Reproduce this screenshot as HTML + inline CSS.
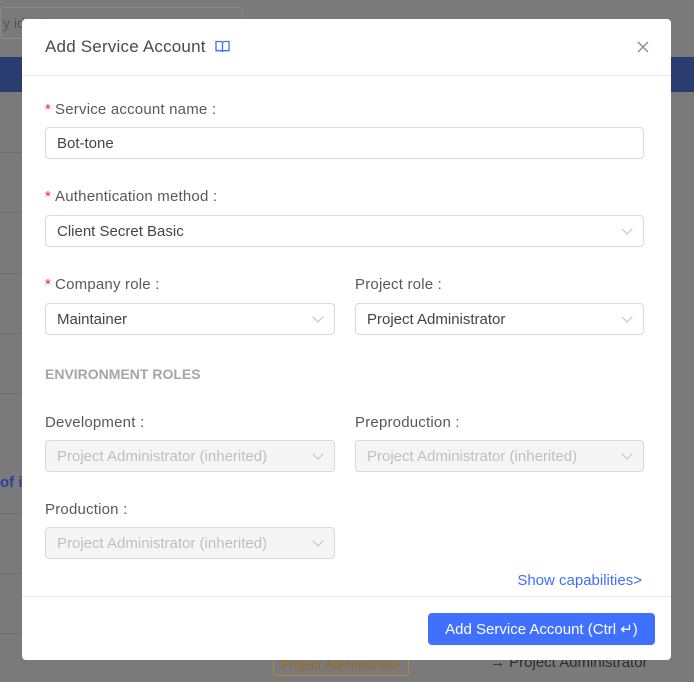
<!DOCTYPE html>
<html><head><meta charset="utf-8"><style>
*{box-sizing:border-box;margin:0;padding:0}
body{width:694px;height:682px;overflow:hidden;background:#7a7a7a;font-family:"Liberation Sans",sans-serif;position:relative}
.a{position:absolute}
.line{position:absolute;left:0;width:22px;height:1px;background:#6e6e6e}
.modal{position:absolute;left:22px;top:19px;width:649px;height:641px;background:#fff;border-radius:4px}
.lbl{position:absolute;font-size:15px;color:#595959;letter-spacing:0.2px}
.req{color:#f5222d;margin-right:4px}
.inp{position:absolute;height:32px;border:1px solid #d9d9d9;border-radius:4px;font-size:15px;color:#444;padding:0 11px;line-height:32px;background:#fff}
.dis{background:#f5f5f5;color:#bfbfbf}
.arr{position:absolute;right:12px;top:9px;width:8px;height:8px;border-right:1px solid #bfbfbf;border-bottom:1px solid #bfbfbf;transform:rotate(45deg)}
</style></head><body>
<div class="a" style="left:0;top:7px;width:243px;height:32px;border:1px solid #8a8a8a;border-radius:4px;color:#555;font-size:14px;line-height:30px;padding-left:2px">y identity</div>
<div class="a" style="left:0;top:57px;width:694px;height:35px;background:#2a3c70"></div>
<div class="line" style="top:152px"></div><div class="line" style="top:212px"></div><div class="line" style="top:273px"></div><div class="line" style="top:333px"></div><div class="line" style="top:393px"></div><div class="line" style="top:513px"></div><div class="line" style="top:573px"></div><div class="line" style="top:633px"></div>
<div class="a" style="left:0;top:474px;color:#2b3f9f;font-size:15px;font-weight:bold">of i</div>
<div class="a" style="left:273px;top:654px;width:136px;height:22px;border:1px solid #b3893a;border-radius:3px;color:#9a6a1a;font-size:13px;line-height:20px;padding-left:7px">Project Administrator</div>
<div class="a" style="left:490px;top:654px;color:#2e2e2e;font-size:15px">→ Project Administrator</div>

<div class="modal">
<div class="a" style="left:23px;top:18px;font-size:17px;color:#4a4a4a;letter-spacing:0.2px">Add Service Account</div>
<svg class="a" style="left:193px;top:21px" width="15" height="13" viewBox="0 0 15 13" fill="none" stroke="#3f6fff" stroke-width="1.3"><path d="M1 1.5h4.5c1 0 2 .8 2 1.8V12c0-.8-.9-1.3-2-1.3H1z M14 1.5H9.5c-1 0-2 .8-2 1.8V12c0-.8.9-1.3 2-1.3H14z"/></svg>
<svg class="a" style="left:615px;top:22px" width="12" height="12" viewBox="0 0 12 12" stroke="#8c8c8c" stroke-width="1.4"><path d="M1 1L11 11M11 1L1 11"/></svg>
<div class="a" style="left:0;top:56px;width:649px;height:1px;background:#e8e8e8"></div>

<div class="lbl" style="left:23px;top:82px"><span class="req">*</span>Service account name :</div>
<div class="inp" style="left:23px;top:108px;width:599px">Bot-tone</div>

<div class="lbl" style="left:23px;top:169px"><span class="req">*</span>Authentication method :</div>
<div class="inp" style="left:23px;top:196px;width:599px">Client Secret Basic<i class="arr"></i></div>

<div class="lbl" style="left:23px;top:257px"><span class="req">*</span>Company role :</div>
<div class="inp" style="left:23px;top:284px;width:290px">Maintainer<i class="arr"></i></div>
<div class="lbl" style="left:333px;top:257px">Project role :</div>
<div class="inp" style="left:333px;top:284px;width:289px">Project Administrator<i class="arr"></i></div>

<div class="a" style="left:23px;top:347px;font-size:14px;font-weight:bold;color:#a6a6a6">ENVIRONMENT ROLES</div>

<div class="lbl" style="left:23px;top:395px">Development :</div>
<div class="inp dis" style="left:23px;top:421px;width:290px">Project Administrator (inherited)<i class="arr"></i></div>
<div class="lbl" style="left:333px;top:395px">Preproduction :</div>
<div class="inp dis" style="left:333px;top:421px;width:289px">Project Administrator (inherited)<i class="arr"></i></div>

<div class="lbl" style="left:23px;top:482px">Production :</div>
<div class="inp dis" style="left:23px;top:508px;width:290px">Project Administrator (inherited)<i class="arr"></i></div>

<div class="a" style="right:29px;top:553px;font-size:15px;color:#3f6fff">Show capabilities&gt;</div>
<div class="a" style="left:0;top:577px;width:649px;height:1px;background:#e8e8e8"></div>
<div class="a" style="left:406px;top:594px;width:227px;height:32px;background:#4070ff;border-radius:4px;color:#fff;font-size:15px;line-height:33px;text-align:center">Add Service Account (Ctrl ↵)</div>
</div>
</body></html>
